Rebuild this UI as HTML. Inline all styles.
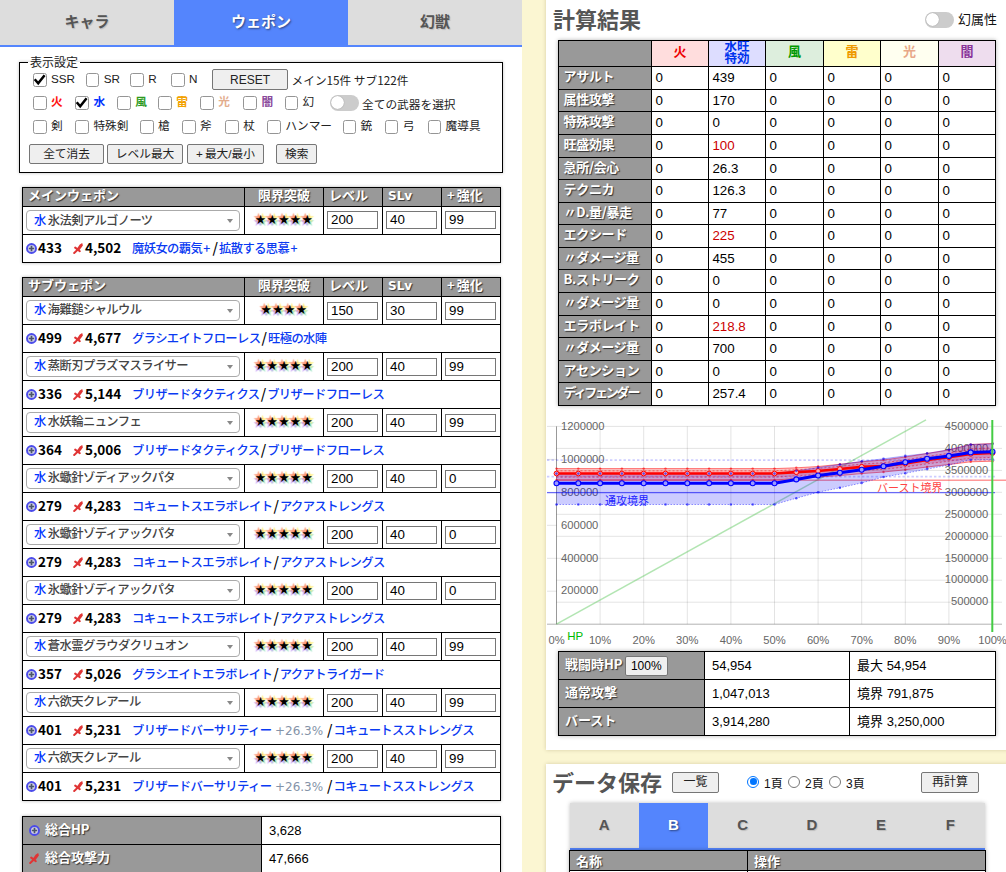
<!DOCTYPE html>
<html lang="ja"><head><meta charset="utf-8"><title>計算機</title>
<style>
html,body{margin:0;padding:0}
body{width:1006px;height:872px;overflow:hidden;background:#fbf6d2;font-family:"Liberation Sans","Noto Sans CJK JP",sans-serif;font-size:13px;color:#000;position:relative;line-height:1.2}
.jp{font-family:"Noto Sans CJK JP","Liberation Sans",sans-serif}
#left{position:absolute;left:0;top:0;width:522px;height:872px;background:#fff;overflow:hidden}
.tabs{position:absolute;left:0;top:0;width:522px;height:45px;border-bottom:2px solid #5485fd;background:#ddd;display:flex}
.tab{flex:1;text-align:center;line-height:41px;font-weight:bold;color:#555;font-size:15px;font-family:"Noto Sans CJK JP","Liberation Sans",sans-serif;text-shadow:1px 1px 1px rgba(0,0,0,.15)}
.tab.on{background:#5485fd;color:#fff;text-shadow:1px 1px 2px rgba(0,0,0,.5)}
fieldset.flt{position:absolute;left:19px;top:54px;width:482px;height:117px;margin:0;padding:0;border:1px solid #000;box-shadow:0 0 3px rgba(0,0,0,.25);box-sizing:content-box}
fieldset.flt legend{margin-left:8px;padding:0 2px;font-size:12px;line-height:16px;font-family:"Noto Sans CJK JP",sans-serif;color:#222}
.ck{position:absolute;height:16px;line-height:16px;font-size:11.7px;white-space:nowrap;color:#222}
.ck i{position:absolute;left:0;top:1px;width:11.5px;height:11.5px;border:1px solid #959595;border-radius:2.5px;background:#fff;display:block}
.ck i svg{position:absolute;left:-1px;top:-1px;display:block}
.ck span{position:absolute;left:18px;top:-1px}
.btn{position:absolute;box-sizing:border-box;border:1px solid #767676;background:#efefef;border-radius:2px;text-align:center;font-size:13px;color:#222;white-space:nowrap;font-family:"Liberation Sans","Noto Sans CJK JP",sans-serif}
.tx{position:absolute;white-space:nowrap}

table{border-collapse:collapse;border-spacing:0}
table.wt,table.sm{position:absolute;left:22px;width:478px;table-layout:fixed;box-shadow:0 0 3px rgba(0,0,0,.3);background:#fff}
table.wt td,table.wt th,table.sm td,table.sm th{border:1px solid #000;padding:0;overflow:hidden;white-space:nowrap}
table.wt tr.h{height:19px}
table.wt th,table.sm th{background:#999;color:#fff;font-weight:bold;font-size:13px;text-align:left;padding-left:5px;font-family:"Noto Sans CJK JP",sans-serif;text-shadow:1px 1px 1px #333;line-height:14px;padding-bottom:4px}
table.wt th.c{text-align:center;padding-left:0}
table.wt th .lt{font-family:"DejaVu Sans",sans-serif;font-size:12px;display:inline-block;height:14px;line-height:17px;vertical-align:top}
table.wt th .pl{letter-spacing:2px}
table.wt tr.r{height:28px}
.sel{position:relative;margin-left:3px;width:212px;height:19px;border:1px solid #aaa;border-radius:4px;font-size:12.3px;letter-spacing:-0.6px;line-height:16.5px;color:#444;font-weight:500;font-family:"Noto Sans CJK JP",sans-serif;padding-left:0;text-indent:7px;background:#fff}
.sel b{color:#0033ff;font-weight:500}
.sel .ar{position:absolute;right:6px;top:8px;width:0;height:0;border-left:3px solid transparent;border-right:3px solid transparent;border-top:4px solid #888}
table.sub .inp{top:0.5px}
table.wt:not(.sub) .sel{line-height:18.5px}
td.st{text-align:center;font-size:10.5px;letter-spacing:1.2px;padding-left:1px !important;padding-bottom:4px !important;font-family:"Noto Sans CJK JP",sans-serif;color:#000;text-shadow:-2px -2px 1px #fb9a7a,2px -2px 1px #fff08a,-2px 2px 1px #c9a8f5,2px 2px 1px #9fe3c4;line-height:18px}
.inp{position:relative;top:-0.5px;margin-left:3px;width:49px;height:16px;border:1px solid #767676;font-size:13.33px;line-height:15px;font-family:"Liberation Sans",sans-serif;text-indent:3px;background:#fff}
td.inf{font-size:11.7px;font-family:"Noto Sans CJK JP",sans-serif;line-height:18px;position:relative}
td.inf .ic{position:absolute;top:8px}
td.inf .ic:nth-of-type(1){left:3px}
td.inf .ic:nth-of-type(2){left:50px}
td.inf b{position:absolute;top:2.5px;font-size:13.5px;font-weight:bold}
td.inf b.n1{left:15px}
td.inf b.n2{left:62px}
td.inf .sk{position:absolute;left:109px;top:2px;font-size:14px;color:#000;line-height:20px}
td.inf .sk a{font-size:12.3px;letter-spacing:-0.6px;font-weight:500}
td.inf .sk .p{display:inline-block;width:9.3px;text-align:center;letter-spacing:0}
td.inf .sk .sl{display:inline-block;width:7.6px;text-align:center;font-weight:500}
td.inf .sk a{color:#0a3af2}
td.inf .sk .ex{color:#8493a8;font-family:"DejaVu Sans",sans-serif;font-size:12px;margin:0 2.8px 0 3.6px}
table.sm tr{height:28px}
table.sm th{position:relative;padding-left:22px;font-size:13px}
table.sm th .ic{position:absolute;left:6px;top:8px}
table.sm td{font-size:13px;padding-left:7px;font-family:"Liberation Sans",sans-serif}

.card{position:absolute;background:#fff;box-shadow:0 0 4px rgba(80,60,0,.22)}
h2.hd{position:absolute;margin:0;font-size:22px;line-height:32px;font-weight:bold;color:#555;font-family:"Noto Sans CJK JP",sans-serif;white-space:nowrap}
.tg{position:absolute;width:28.5px;height:16px;border-radius:8px;background:#ccc}
.tg i{position:absolute;left:1px;top:1px;width:13px;height:13px;border-radius:50%;background:#fff;box-shadow:0 0 1px rgba(0,0,0,.4)}
table.res,table.hp,table.sv{position:absolute;table-layout:fixed;box-shadow:0 0 4px rgba(0,0,0,.3);background:#fff}
table.res{width:437px}
table.res td,table.res th,table.hp td,table.hp th,table.sv td,table.sv th{border:1px solid #000;padding:0;overflow:hidden;white-space:nowrap}
table.res tr{height:22.57px}
table.res tr.h{height:26px}
table.res th,table.hp th,table.sv th{background:#999;color:#fff;font-weight:bold;font-size:13px;text-align:left;font-family:"Noto Sans CJK JP",sans-serif;text-shadow:1px 1px 1px #333;line-height:16px}
table.res th span{display:block;padding-left:4.5px;margin-top:-4px;letter-spacing:-0.3px}
table.res tr.h th{text-align:center;text-shadow:none;font-size:13px;padding:0 0 6px 0}
table.res td{font-size:13.33px;font-family:"Liberation Sans",sans-serif;padding-left:3.4px;line-height:16px}
table.res td.red{color:#cc0000}
th.e1{background:#ffdddd !important;color:#ee0000 !important}
th.e2{background:#ddddff !important;color:#0033ee !important}
th.e2 div{font-size:12.5px;line-height:12.5px;font-weight:bold;margin-top:-3px;margin-bottom:-6px}
th.e3{background:#ddeedd !important;color:#009900 !important}
th.e4{background:#ffffcc !important;color:#ee9900 !important}
th.e5{background:#fffff0 !important;color:#e8a888 !important}
th.e6{background:#eeddee !important;color:#883399 !important}
table.hp{width:437px}
table.hp tr{height:28px}
table.hp th{position:relative}
table.hp th span{padding-left:6px;position:relative;top:-2px}
table.hp td{font-size:13px;font-family:"Liberation Sans",sans-serif;padding-left:7px}
.rd{position:absolute;font-size:12px;line-height:16px;font-family:"Liberation Sans","Noto Sans CJK JP",sans-serif;color:#111;white-space:nowrap}
.rd i{position:absolute;left:0.3px;top:0.7px;width:10px;height:10px;border:1px solid #777;border-radius:50%;background:#fff}
.rd i.on{border-color:#0075ff}
.rd i.on::after{content:"";position:absolute;left:1.7px;top:1.7px;width:6.6px;height:6.6px;border-radius:50%;background:#0075ff}
.rd span{position:absolute;left:17px;top:1px}
.stabs{position:absolute;height:45px;border-bottom:2px solid #5485fd;background:#ddd;display:flex;box-shadow:0 0 4px rgba(0,0,0,.25)}
.stabs .tab{font-size:15px;line-height:43px;font-family:"Liberation Sans",sans-serif}
table.sv{width:416px}
table.sv tr{height:20px}
table.sv th{padding-left:6px}
</style></head><body>
<div id="left">
<div class="tabs"><div class="tab">キャラ</div><div class="tab on">ウェポン</div><div class="tab">幻獣</div></div>
<fieldset class="flt"><legend>表示設定</legend></fieldset>
<label class="ck" style="left:33px;top:72.3px"><i><svg width="13.5" height="13.5" viewBox="0 0 13.5 13.5"><path d="M1.7 6.3L5.2 10.3L11.6 2.2" fill="none" stroke="#000" stroke-width="2.5" stroke-linejoin="miter"/></svg></i><span style="">SSR</span></label>
<label class="ck" style="left:85.8px;top:72.3px"><i></i><span style="">SR</span></label>
<label class="ck" style="left:130.3px;top:72.3px"><i></i><span style="">R</span></label>
<label class="ck" style="left:171.1px;top:72.3px"><i></i><span style="">N</span></label>
<div class="btn" style="left:212px;top:69px;width:76px;height:21px;line-height:20.5px;font-size:12px">RESET</div>
<div class="tx jp" style="left:291.5px;top:72px;font-size:11.7px;line-height:16px;color:#222">メイン15件 サブ122件</div>
<label class="ck" style="left:33px;top:95.4px"><i></i><span style="color:#ff1111;font-weight:bold;">火</span></label>
<label class="ck" style="left:75.4px;top:95.4px"><i><svg width="13.5" height="13.5" viewBox="0 0 13.5 13.5"><path d="M1.7 6.3L5.2 10.3L11.6 2.2" fill="none" stroke="#000" stroke-width="2.5" stroke-linejoin="miter"/></svg></i><span style="color:#0033ff;font-weight:bold;">水</span></label>
<label class="ck" style="left:117.2px;top:95.4px"><i></i><span style="color:#2e9a1e;font-weight:bold;">風</span></label>
<label class="ck" style="left:158.2px;top:95.4px"><i></i><span style="color:#f2a200;font-weight:bold;">雷</span></label>
<label class="ck" style="left:200.2px;top:95.4px"><i></i><span style="color:#e3ad8e;font-weight:bold;">光</span></label>
<label class="ck" style="left:243.4px;top:95.4px"><i></i><span style="color:#8a4a9c;font-weight:bold;">闇</span></label>
<label class="ck" style="left:284.6px;top:95.4px"><i></i><span style="color:#222;">幻</span></label>
<div class="tg" style="left:330px;top:95px"><i></i></div>
<div class="tx jp" style="left:362px;top:95.5px;font-size:11.7px;line-height:16px;color:#222">全ての武器を選択</div>
<label class="ck" style="left:33px;top:119.2px"><i></i><span style="">剣</span></label>
<label class="ck" style="left:75.4px;top:119.2px"><i></i><span style="">特殊剣</span></label>
<label class="ck" style="left:140px;top:119.2px"><i></i><span style="">槍</span></label>
<label class="ck" style="left:182px;top:119.2px"><i></i><span style="">斧</span></label>
<label class="ck" style="left:225.3px;top:119.2px"><i></i><span style="">杖</span></label>
<label class="ck" style="left:267.3px;top:119.2px"><i></i><span style="">ハンマー</span></label>
<label class="ck" style="left:342.5px;top:119.2px"><i></i><span style="">銃</span></label>
<label class="ck" style="left:384.8px;top:119.2px"><i></i><span style="">弓</span></label>
<label class="ck" style="left:427.5px;top:119.2px"><i></i><span style="">魔導具</span></label>
<div class="btn jp" style="left:29.3px;top:143.5px;width:74.5px;height:20.5px;line-height:18px;font-size:11.7px">全て消去</div>
<div class="btn jp" style="left:107.3px;top:143.5px;width:75.5px;height:20.5px;line-height:18px;font-size:11.7px">レベル最大</div>
<div class="btn jp" style="left:187px;top:143.5px;width:77px;height:20.5px;line-height:18px;font-size:11.7px"><span style="letter-spacing:2px">+</span>最大/最小</div>
<div class="btn jp" style="left:276.3px;top:143.5px;width:41px;height:20.5px;line-height:18px;font-size:11.7px">検索</div>
<table class="wt" style="top:187px"><colgroup><col style="width:222px"><col style="width:79px"><col style="width:59px"><col style="width:59px"><col style="width:59px"></colgroup>
<tr class="h"><th>メインウェポン</th><th class="c">限界突破</th><th>レベル</th><th><span class="lt">SLv</span></th><th><span class="pl">+</span>強化</th></tr>
<tr class="r"><td><div class="sel"><b>水</b> 氷法剣アルゴノーツ<span class="ar"></span></div></td><td class="st">★★★★★</td><td><div class="inp">200</div></td><td><div class="inp">40</div></td><td><div class="inp">99</div></td></tr>
<tr class="r"><td colspan="5" class="inf"><svg class="ic" width="11" height="11" viewBox="0 0 11 11"><circle cx="5.5" cy="5.5" r="4.5" fill="#cfcfe6" stroke="#4b4bea" stroke-width="1.9"/><path d="M5.5 2.8v5.4M2.8 5.5h5.4" stroke="#4a5568" stroke-width="1.7" fill="none"/></svg><b class="n1">433</b><svg class="ic" width="10" height="11" viewBox="0 0 10 11"><path d="M9.2 0L9.9 2.4 6.2 7.6 3.8 5.8 6.8 1.4z" fill="#e03535"/><path d="M2.2 4.6L6.8 8.2M4.6 6.8L1.2 10" stroke="#e03535" stroke-width="2" fill="none" stroke-linecap="round"/></svg><b class="n2">4,502</b><span class="sk"><a>魔妖女の覇気<span class="p">+</span></a><span class="sl">/</span><a>拡散する思慕<span class="p">+</span></a></span></td></tr>
</table>
<table class="wt sub" style="top:277px"><colgroup><col style="width:222px"><col style="width:79px"><col style="width:59px"><col style="width:59px"><col style="width:59px"></colgroup>
<tr class="h"><th>サブウェポン</th><th class="c">限界突破</th><th>レベル</th><th><span class="lt">SLv</span></th><th><span class="pl">+</span>強化</th></tr>
<tr class="r"><td><div class="sel"><b>水</b> 海難鎚シャルウル<span class="ar"></span></div></td><td class="st">★★★★</td><td><div class="inp">150</div></td><td><div class="inp">30</div></td><td><div class="inp">99</div></td></tr>
<tr class="r"><td colspan="5" class="inf"><svg class="ic" width="11" height="11" viewBox="0 0 11 11"><circle cx="5.5" cy="5.5" r="4.5" fill="#cfcfe6" stroke="#4b4bea" stroke-width="1.9"/><path d="M5.5 2.8v5.4M2.8 5.5h5.4" stroke="#4a5568" stroke-width="1.7" fill="none"/></svg><b class="n1">499</b><svg class="ic" width="10" height="11" viewBox="0 0 10 11"><path d="M9.2 0L9.9 2.4 6.2 7.6 3.8 5.8 6.8 1.4z" fill="#e03535"/><path d="M2.2 4.6L6.8 8.2M4.6 6.8L1.2 10" stroke="#e03535" stroke-width="2" fill="none" stroke-linecap="round"/></svg><b class="n2">4,677</b><span class="sk"><a>グラシエイトフローレス</a><span class="sl">/</span><a>旺極の水陣</a></span></td></tr>
<tr class="r"><td><div class="sel"><b>水</b> 蒸断刃プラズマスライサー<span class="ar"></span></div></td><td class="st">★★★★★</td><td><div class="inp">200</div></td><td><div class="inp">40</div></td><td><div class="inp">99</div></td></tr>
<tr class="r"><td colspan="5" class="inf"><svg class="ic" width="11" height="11" viewBox="0 0 11 11"><circle cx="5.5" cy="5.5" r="4.5" fill="#cfcfe6" stroke="#4b4bea" stroke-width="1.9"/><path d="M5.5 2.8v5.4M2.8 5.5h5.4" stroke="#4a5568" stroke-width="1.7" fill="none"/></svg><b class="n1">336</b><svg class="ic" width="10" height="11" viewBox="0 0 10 11"><path d="M9.2 0L9.9 2.4 6.2 7.6 3.8 5.8 6.8 1.4z" fill="#e03535"/><path d="M2.2 4.6L6.8 8.2M4.6 6.8L1.2 10" stroke="#e03535" stroke-width="2" fill="none" stroke-linecap="round"/></svg><b class="n2">5,144</b><span class="sk"><a>ブリザードタクティクス</a><span class="sl">/</span><a>ブリザードフローレス</a></span></td></tr>
<tr class="r"><td><div class="sel"><b>水</b> 水妖輪ニュンフェ<span class="ar"></span></div></td><td class="st">★★★★★</td><td><div class="inp">200</div></td><td><div class="inp">40</div></td><td><div class="inp">99</div></td></tr>
<tr class="r"><td colspan="5" class="inf"><svg class="ic" width="11" height="11" viewBox="0 0 11 11"><circle cx="5.5" cy="5.5" r="4.5" fill="#cfcfe6" stroke="#4b4bea" stroke-width="1.9"/><path d="M5.5 2.8v5.4M2.8 5.5h5.4" stroke="#4a5568" stroke-width="1.7" fill="none"/></svg><b class="n1">364</b><svg class="ic" width="10" height="11" viewBox="0 0 10 11"><path d="M9.2 0L9.9 2.4 6.2 7.6 3.8 5.8 6.8 1.4z" fill="#e03535"/><path d="M2.2 4.6L6.8 8.2M4.6 6.8L1.2 10" stroke="#e03535" stroke-width="2" fill="none" stroke-linecap="round"/></svg><b class="n2">5,006</b><span class="sk"><a>ブリザードタクティクス</a><span class="sl">/</span><a>ブリザードフローレス</a></span></td></tr>
<tr class="r"><td><div class="sel"><b>水</b> 氷蠍針ゾディアックパタ<span class="ar"></span></div></td><td class="st">★★★★★</td><td><div class="inp">200</div></td><td><div class="inp">40</div></td><td><div class="inp">0</div></td></tr>
<tr class="r"><td colspan="5" class="inf"><svg class="ic" width="11" height="11" viewBox="0 0 11 11"><circle cx="5.5" cy="5.5" r="4.5" fill="#cfcfe6" stroke="#4b4bea" stroke-width="1.9"/><path d="M5.5 2.8v5.4M2.8 5.5h5.4" stroke="#4a5568" stroke-width="1.7" fill="none"/></svg><b class="n1">279</b><svg class="ic" width="10" height="11" viewBox="0 0 10 11"><path d="M9.2 0L9.9 2.4 6.2 7.6 3.8 5.8 6.8 1.4z" fill="#e03535"/><path d="M2.2 4.6L6.8 8.2M4.6 6.8L1.2 10" stroke="#e03535" stroke-width="2" fill="none" stroke-linecap="round"/></svg><b class="n2">4,283</b><span class="sk"><a>コキュートスエラボレイト</a><span class="sl">/</span><a>アクアストレングス</a></span></td></tr>
<tr class="r"><td><div class="sel"><b>水</b> 氷蠍針ゾディアックパタ<span class="ar"></span></div></td><td class="st">★★★★★</td><td><div class="inp">200</div></td><td><div class="inp">40</div></td><td><div class="inp">0</div></td></tr>
<tr class="r"><td colspan="5" class="inf"><svg class="ic" width="11" height="11" viewBox="0 0 11 11"><circle cx="5.5" cy="5.5" r="4.5" fill="#cfcfe6" stroke="#4b4bea" stroke-width="1.9"/><path d="M5.5 2.8v5.4M2.8 5.5h5.4" stroke="#4a5568" stroke-width="1.7" fill="none"/></svg><b class="n1">279</b><svg class="ic" width="10" height="11" viewBox="0 0 10 11"><path d="M9.2 0L9.9 2.4 6.2 7.6 3.8 5.8 6.8 1.4z" fill="#e03535"/><path d="M2.2 4.6L6.8 8.2M4.6 6.8L1.2 10" stroke="#e03535" stroke-width="2" fill="none" stroke-linecap="round"/></svg><b class="n2">4,283</b><span class="sk"><a>コキュートスエラボレイト</a><span class="sl">/</span><a>アクアストレングス</a></span></td></tr>
<tr class="r"><td><div class="sel"><b>水</b> 氷蠍針ゾディアックパタ<span class="ar"></span></div></td><td class="st">★★★★★</td><td><div class="inp">200</div></td><td><div class="inp">40</div></td><td><div class="inp">0</div></td></tr>
<tr class="r"><td colspan="5" class="inf"><svg class="ic" width="11" height="11" viewBox="0 0 11 11"><circle cx="5.5" cy="5.5" r="4.5" fill="#cfcfe6" stroke="#4b4bea" stroke-width="1.9"/><path d="M5.5 2.8v5.4M2.8 5.5h5.4" stroke="#4a5568" stroke-width="1.7" fill="none"/></svg><b class="n1">279</b><svg class="ic" width="10" height="11" viewBox="0 0 10 11"><path d="M9.2 0L9.9 2.4 6.2 7.6 3.8 5.8 6.8 1.4z" fill="#e03535"/><path d="M2.2 4.6L6.8 8.2M4.6 6.8L1.2 10" stroke="#e03535" stroke-width="2" fill="none" stroke-linecap="round"/></svg><b class="n2">4,283</b><span class="sk"><a>コキュートスエラボレイト</a><span class="sl">/</span><a>アクアストレングス</a></span></td></tr>
<tr class="r"><td><div class="sel"><b>水</b> 蒼水霊グラウダクリュオン<span class="ar"></span></div></td><td class="st">★★★★★</td><td><div class="inp">200</div></td><td><div class="inp">40</div></td><td><div class="inp">99</div></td></tr>
<tr class="r"><td colspan="5" class="inf"><svg class="ic" width="11" height="11" viewBox="0 0 11 11"><circle cx="5.5" cy="5.5" r="4.5" fill="#cfcfe6" stroke="#4b4bea" stroke-width="1.9"/><path d="M5.5 2.8v5.4M2.8 5.5h5.4" stroke="#4a5568" stroke-width="1.7" fill="none"/></svg><b class="n1">357</b><svg class="ic" width="10" height="11" viewBox="0 0 10 11"><path d="M9.2 0L9.9 2.4 6.2 7.6 3.8 5.8 6.8 1.4z" fill="#e03535"/><path d="M2.2 4.6L6.8 8.2M4.6 6.8L1.2 10" stroke="#e03535" stroke-width="2" fill="none" stroke-linecap="round"/></svg><b class="n2">5,026</b><span class="sk"><a>グラシエイトエラボレイト</a><span class="sl">/</span><a>アクアトライガード</a></span></td></tr>
<tr class="r"><td><div class="sel"><b>水</b> 六欲天クレアール<span class="ar"></span></div></td><td class="st">★★★★★</td><td><div class="inp">200</div></td><td><div class="inp">40</div></td><td><div class="inp">99</div></td></tr>
<tr class="r"><td colspan="5" class="inf"><svg class="ic" width="11" height="11" viewBox="0 0 11 11"><circle cx="5.5" cy="5.5" r="4.5" fill="#cfcfe6" stroke="#4b4bea" stroke-width="1.9"/><path d="M5.5 2.8v5.4M2.8 5.5h5.4" stroke="#4a5568" stroke-width="1.7" fill="none"/></svg><b class="n1">401</b><svg class="ic" width="10" height="11" viewBox="0 0 10 11"><path d="M9.2 0L9.9 2.4 6.2 7.6 3.8 5.8 6.8 1.4z" fill="#e03535"/><path d="M2.2 4.6L6.8 8.2M4.6 6.8L1.2 10" stroke="#e03535" stroke-width="2" fill="none" stroke-linecap="round"/></svg><b class="n2">5,231</b><span class="sk"><a>ブリザードバーサリティー</a><span class="ex">+26.3%</span><span class="sl">/</span><a>コキュートスストレングス</a></span></td></tr>
<tr class="r"><td><div class="sel"><b>水</b> 六欲天クレアール<span class="ar"></span></div></td><td class="st">★★★★★</td><td><div class="inp">200</div></td><td><div class="inp">40</div></td><td><div class="inp">99</div></td></tr>
<tr class="r"><td colspan="5" class="inf"><svg class="ic" width="11" height="11" viewBox="0 0 11 11"><circle cx="5.5" cy="5.5" r="4.5" fill="#cfcfe6" stroke="#4b4bea" stroke-width="1.9"/><path d="M5.5 2.8v5.4M2.8 5.5h5.4" stroke="#4a5568" stroke-width="1.7" fill="none"/></svg><b class="n1">401</b><svg class="ic" width="10" height="11" viewBox="0 0 10 11"><path d="M9.2 0L9.9 2.4 6.2 7.6 3.8 5.8 6.8 1.4z" fill="#e03535"/><path d="M2.2 4.6L6.8 8.2M4.6 6.8L1.2 10" stroke="#e03535" stroke-width="2" fill="none" stroke-linecap="round"/></svg><b class="n2">5,231</b><span class="sk"><a>ブリザードバーサリティー</a><span class="ex">+26.3%</span><span class="sl">/</span><a>コキュートスストレングス</a></span></td></tr>
</table>
<table class="sm" style="top:816px"><colgroup><col style="width:239px"><col style="width:239px"></colgroup>
<tr><th><svg class="ic" width="11" height="11" viewBox="0 0 11 11"><circle cx="5.5" cy="5.5" r="4.5" fill="#cfcfe6" stroke="#4b4bea" stroke-width="1.9"/><path d="M5.5 2.8v5.4M2.8 5.5h5.4" stroke="#4a5568" stroke-width="1.7" fill="none"/></svg><span>総合HP</span></th><td>3,628</td></tr>
<tr><th><svg class="ic" width="10" height="11" viewBox="0 0 10 11"><path d="M9.2 0L9.9 2.4 6.2 7.6 3.8 5.8 6.8 1.4z" fill="#e03535"/><path d="M2.2 4.6L6.8 8.2M4.6 6.8L1.2 10" stroke="#e03535" stroke-width="2" fill="none" stroke-linecap="round"/></svg><span>総合攻撃力</span></th><td>47,666</td></tr>
<tr><th><span>&nbsp;</span></th><td></td></tr>
</table>
</div>
<div id="r1" class="card" style="left:546px;top:-6px;width:466px;height:756px"></div>
<div id="r2" class="card" style="left:546px;top:764px;width:466px;height:120px"></div>
<h2 class="hd" style="left:553px;top:1.5px">計算結果</h2>
<div class="tg" style="left:925px;top:12px"><i></i></div><div class="tx jp" style="left:958px;top:9px;font-size:13px;line-height:19px;color:#111">幻属性</div>
<table class="res" style="left:558px;top:40px"><colgroup><col style="width:93px"><col style="width:57px"><col style="width:57px"><col style="width:58px"><col style="width:57px"><col style="width:58px"><col style="width:57px"></colgroup>
<tr class="h"><th></th><th class="e1">火</th><th class="e2"><div>水旺<br>特効</div></th><th class="e3">風</th><th class="e4">雷</th><th class="e5">光</th><th class="e6">闇</th></tr>
<tr style="height:23px"><th><span>アサルト</span></th><td>0</td><td>439</td><td>0</td><td>0</td><td>0</td><td>0</td></tr>
<tr style="height:22px"><th><span>属性攻撃</span></th><td>0</td><td>170</td><td>0</td><td>0</td><td>0</td><td>0</td></tr>
<tr style="height:23px"><th><span>特殊攻撃</span></th><td>0</td><td>0</td><td>0</td><td>0</td><td>0</td><td>0</td></tr>
<tr style="height:23px"><th><span>旺盛効果</span></th><td>0</td><td class="red">100</td><td>0</td><td>0</td><td>0</td><td>0</td></tr>
<tr style="height:22px"><th><span>急所/会心</span></th><td>0</td><td>26.3</td><td>0</td><td>0</td><td>0</td><td>0</td></tr>
<tr style="height:23px"><th><span>テクニカ</span></th><td>0</td><td>126.3</td><td>0</td><td>0</td><td>0</td><td>0</td></tr>
<tr style="height:22px"><th><span>〃D.量/暴走</span></th><td>0</td><td>77</td><td>0</td><td>0</td><td>0</td><td>0</td></tr>
<tr style="height:23px"><th><span>エクシード</span></th><td>0</td><td class="red">225</td><td>0</td><td>0</td><td>0</td><td>0</td></tr>
<tr style="height:22px"><th><span>〃ダメージ量</span></th><td>0</td><td>455</td><td>0</td><td>0</td><td>0</td><td>0</td></tr>
<tr style="height:23px"><th><span>B.ストリーク</span></th><td>0</td><td>0</td><td>0</td><td>0</td><td>0</td><td>0</td></tr>
<tr style="height:23px"><th><span>〃ダメージ量</span></th><td>0</td><td>0</td><td>0</td><td>0</td><td>0</td><td>0</td></tr>
<tr style="height:22px"><th><span>エラボレイト</span></th><td>0</td><td class="red">218.8</td><td>0</td><td>0</td><td>0</td><td>0</td></tr>
<tr style="height:23px"><th><span>〃ダメージ量</span></th><td>0</td><td>700</td><td>0</td><td>0</td><td>0</td><td>0</td></tr>
<tr style="height:22px"><th><span>アセンション</span></th><td>0</td><td>0</td><td>0</td><td>0</td><td>0</td><td>0</td></tr>
<tr style="height:23px"><th><span style="letter-spacing:-2.2px">ディフェンダー</span></th><td>0</td><td>257.4</td><td>0</td><td>0</td><td>0</td><td>0</td></tr>
</table>
<svg id="chart" width="460" height="244" viewBox="546 408 460 244" style="position:absolute;left:546px;top:408px;overflow:hidden" font-family="Liberation Sans, sans-serif">
<g stroke="#000" stroke-opacity="0.11" stroke-width="1" fill="none">
<path d="M600.1 426.4V624.2"/>
<path d="M643.7 426.4V624.2"/>
<path d="M687.3 426.4V624.2"/>
<path d="M730.9 426.4V624.2"/>
<path d="M774.5 426.4V624.2"/>
<path d="M818.1 426.4V624.2"/>
<path d="M861.7 426.4V624.2"/>
<path d="M905.3 426.4V624.2"/>
<path d="M948.9 426.4V624.2"/>
<path d="M547.0 426.4H1002"/>
<path d="M556.5 448.4H1002"/>
<path d="M556.5 470.4H1002"/>
<path d="M556.5 492.3H1002"/>
<path d="M556.5 514.3H1002"/>
<path d="M556.5 536.3H1002"/>
<path d="M556.5 558.3H1002"/>
<path d="M556.5 580.2H1002"/>
<path d="M556.5 602.2H1002"/>
<path d="M547 459.4H556.5"/>
<path d="M547 492.3H556.5"/>
<path d="M547 525.3H556.5"/>
<path d="M547 558.3H556.5"/>
<path d="M547 591.2H556.5"/>
</g>
<path d="M547 624.2H1002" stroke="#000" stroke-opacity="0.3" stroke-width="1" fill="none"/>
<path d="M556.5 426.4V624.2" stroke="#000" stroke-opacity="0.4" stroke-width="1" fill="none"/>
<g font-size="11.2" fill="#666">
<text x="561" y="429.6">1200000</text>
<text x="561" y="462.6">1000000</text>
<text x="561" y="495.5">800000</text>
<text x="561" y="528.5">600000</text>
<text x="561" y="561.5">400000</text>
<text x="561" y="594.4">200000</text>
<text x="988.3" y="429.6" text-anchor="end">4500000</text>
<text x="988.3" y="451.6" text-anchor="end">4000000</text>
<text x="988.3" y="473.6" text-anchor="end">3500000</text>
<text x="988.3" y="495.5" text-anchor="end">3000000</text>
<text x="988.3" y="517.5" text-anchor="end">2500000</text>
<text x="988.3" y="539.5" text-anchor="end">2000000</text>
<text x="988.3" y="561.5" text-anchor="end">1500000</text>
<text x="988.3" y="583.4" text-anchor="end">1000000</text>
<text x="988.3" y="605.4" text-anchor="end">500000</text>
<text x="556.5" y="643.5" text-anchor="middle">0%</text>
<text x="600.1" y="643.5" text-anchor="middle">10%</text>
<text x="643.7" y="643.5" text-anchor="middle">20%</text>
<text x="687.3" y="643.5" text-anchor="middle">30%</text>
<text x="730.9" y="643.5" text-anchor="middle">40%</text>
<text x="774.5" y="643.5" text-anchor="middle">50%</text>
<text x="818.1" y="643.5" text-anchor="middle">60%</text>
<text x="861.7" y="643.5" text-anchor="middle">70%</text>
<text x="905.3" y="643.5" text-anchor="middle">80%</text>
<text x="948.9" y="643.5" text-anchor="middle">90%</text>
<text x="992.5" y="643.5" text-anchor="middle">100%</text>
</g>
<text x="567.3" y="639.5" font-size="11.5" fill="#00bb00">HP</text>
<path d="M556.5 624.2L926 419.8" stroke="#66cc66" stroke-opacity="0.5" stroke-width="1.5" fill="none"/>
<path d="M547 460.2H995M547 476.6H995" stroke="#0000ff" stroke-opacity="0.2" stroke-width="1.8" stroke-dasharray="2.4 2.1" fill="none"/>
<path d="M547 492.6H995" stroke="#0000ff" stroke-opacity="0.55" stroke-width="1.2" fill="none"/>
<path d="M556.5 480.2H1006" stroke="#ff0000" stroke-opacity="0.4" stroke-width="1.5" fill="none"/>
<polygon points="556.5,468.6 578.3,468.6 600.1,468.6 621.9,468.6 643.7,468.6 665.5,468.6 687.3,468.6 709.1,468.6 730.9,468.6 752.7,468.6 774.5,468.6 796.3,467.8 818.1,466.5 839.9,464.3 861.7,461.8 883.5,460.0 905.3,457.0 927.1,453.5 948.9,450.0 970.7,444.5 992.5,443.5 992.5,461.2 970.7,461.8 948.9,464.5 927.1,467.0 905.3,469.8 883.5,472.0 861.7,473.6 839.9,475.5 818.1,477.2 796.3,478.5 774.5,480.0 752.7,480.0 730.9,480.0 709.1,480.0 687.3,480.0 665.5,480.0 643.7,480.0 621.9,480.0 600.1,480.0 578.3,480.0 556.5,480.0" fill="#ff0000" fill-opacity="0.22"/>
<polygon points="556.5,470.8 578.3,470.8 600.1,470.8 621.9,470.8 643.7,470.8 665.5,470.8 687.3,470.8 709.1,470.8 730.9,470.8 752.7,470.8 774.5,470.8 796.3,469.7 818.1,468.4 839.9,466.3 861.7,464.0 883.5,462.7 905.3,459.9 927.1,456.4 948.9,453.3 970.7,448.8 992.5,447.9 992.5,457.4 970.7,458.1 948.9,461.2 927.1,463.8 905.3,466.9 883.5,469.3 861.7,470.5 839.9,472.6 818.1,474.4 796.3,475.7 774.5,477.1 752.7,477.1 730.9,477.1 709.1,477.1 687.3,477.1 665.5,477.1 643.7,477.1 621.9,477.1 600.1,477.1 578.3,477.1 556.5,477.1" fill="#ff0000" fill-opacity="0.12"/>
<g stroke="#ff0000" stroke-opacity="0.5" stroke-width="1" fill="none"><polyline points="556.5,468.6 578.3,468.6 600.1,468.6 621.9,468.6 643.7,468.6 665.5,468.6 687.3,468.6 709.1,468.6 730.9,468.6 752.7,468.6 774.5,468.6 796.3,467.8 818.1,466.5 839.9,464.3 861.7,461.8 883.5,460.0 905.3,457.0 927.1,453.5 948.9,450.0 970.7,444.5 992.5,443.5"/><polyline points="556.5,480.0 578.3,480.0 600.1,480.0 621.9,480.0 643.7,480.0 665.5,480.0 687.3,480.0 709.1,480.0 730.9,480.0 752.7,480.0 774.5,480.0 796.3,478.5 818.1,477.2 839.9,475.5 861.7,473.6 883.5,472.0 905.3,469.8 927.1,467.0 948.9,464.5 970.7,461.8 992.5,461.2"/><polyline points="556.5,470.8 578.3,470.8 600.1,470.8 621.9,470.8 643.7,470.8 665.5,470.8 687.3,470.8 709.1,470.8 730.9,470.8 752.7,470.8 774.5,470.8 796.3,469.7 818.1,468.4 839.9,466.3 861.7,464.0 883.5,462.7 905.3,459.9 927.1,456.4 948.9,453.3 970.7,448.8 992.5,447.9" stroke-dasharray="2 2"/><polyline points="556.5,477.1 578.3,477.1 600.1,477.1 621.9,477.1 643.7,477.1 665.5,477.1 687.3,477.1 709.1,477.1 730.9,477.1 752.7,477.1 774.5,477.1 796.3,475.7 818.1,474.4 839.9,472.6 861.7,470.5 883.5,469.3 905.3,466.9 927.1,463.8 948.9,461.2 970.7,458.1 992.5,457.4" stroke-dasharray="2 2"/></g>
<g fill="#ff0000" fill-opacity="0.6">
<circle cx="556.5" cy="468.6" r="1.2"/>
<circle cx="578.3" cy="468.6" r="1.2"/>
<circle cx="600.1" cy="468.6" r="1.2"/>
<circle cx="621.9" cy="468.6" r="1.2"/>
<circle cx="643.7" cy="468.6" r="1.2"/>
<circle cx="665.5" cy="468.6" r="1.2"/>
<circle cx="687.3" cy="468.6" r="1.2"/>
<circle cx="709.1" cy="468.6" r="1.2"/>
<circle cx="730.9" cy="468.6" r="1.2"/>
<circle cx="752.7" cy="468.6" r="1.2"/>
<circle cx="774.5" cy="468.6" r="1.2"/>
<circle cx="796.3" cy="467.8" r="1.2"/>
<circle cx="818.1" cy="466.5" r="1.2"/>
<circle cx="839.9" cy="464.3" r="1.2"/>
<circle cx="861.7" cy="461.8" r="1.2"/>
<circle cx="883.5" cy="460.0" r="1.2"/>
<circle cx="905.3" cy="457.0" r="1.2"/>
<circle cx="927.1" cy="453.5" r="1.2"/>
<circle cx="948.9" cy="450.0" r="1.2"/>
<circle cx="970.7" cy="444.5" r="1.2"/>
<circle cx="992.5" cy="443.5" r="1.2"/>
<circle cx="556.5" cy="480.0" r="1.2"/>
<circle cx="578.3" cy="480.0" r="1.2"/>
<circle cx="600.1" cy="480.0" r="1.2"/>
<circle cx="621.9" cy="480.0" r="1.2"/>
<circle cx="643.7" cy="480.0" r="1.2"/>
<circle cx="665.5" cy="480.0" r="1.2"/>
<circle cx="687.3" cy="480.0" r="1.2"/>
<circle cx="709.1" cy="480.0" r="1.2"/>
<circle cx="730.9" cy="480.0" r="1.2"/>
<circle cx="752.7" cy="480.0" r="1.2"/>
<circle cx="774.5" cy="480.0" r="1.2"/>
<circle cx="796.3" cy="478.5" r="1.2"/>
<circle cx="818.1" cy="477.2" r="1.2"/>
<circle cx="839.9" cy="475.5" r="1.2"/>
<circle cx="861.7" cy="473.6" r="1.2"/>
<circle cx="883.5" cy="472.0" r="1.2"/>
<circle cx="905.3" cy="469.8" r="1.2"/>
<circle cx="927.1" cy="467.0" r="1.2"/>
<circle cx="948.9" cy="464.5" r="1.2"/>
<circle cx="970.7" cy="461.8" r="1.2"/>
<circle cx="992.5" cy="461.2" r="1.2"/>
</g>
<polygon points="556.5,473.6 578.3,473.6 600.1,473.6 621.9,473.6 643.7,473.6 665.5,473.6 687.3,473.6 709.1,473.6 730.9,473.6 752.7,473.6 774.5,473.6 796.3,470.8 818.1,467.6 839.9,464.5 861.7,461.3 883.5,458.8 905.3,455.9 927.1,453.4 948.9,449.7 970.7,444.5 992.5,443.8 992.5,459.4 970.7,459.8 948.9,465.0 927.1,469.1 905.3,473.3 883.5,477.0 861.7,482.9 839.9,487.8 818.1,492.2 796.3,498.2 774.5,504.5 752.7,504.5 730.9,504.5 709.1,504.5 687.3,504.5 665.5,504.5 643.7,504.5 621.9,504.5 600.1,504.5 578.3,504.5 556.5,504.5" fill="#0000ff" fill-opacity="0.2"/>
<g stroke="#0000ff" stroke-opacity="0.3" stroke-width="1" fill="none"><polyline points="556.5,473.6 578.3,473.6 600.1,473.6 621.9,473.6 643.7,473.6 665.5,473.6 687.3,473.6 709.1,473.6 730.9,473.6 752.7,473.6 774.5,473.6 796.3,470.8 818.1,467.6 839.9,464.5 861.7,461.3 883.5,458.8 905.3,455.9 927.1,453.4 948.9,449.7 970.7,444.5 992.5,443.8"/><polyline points="556.5,504.5 578.3,504.5 600.1,504.5 621.9,504.5 643.7,504.5 665.5,504.5 687.3,504.5 709.1,504.5 730.9,504.5 752.7,504.5 774.5,504.5 796.3,498.2 818.1,492.2 839.9,487.8 861.7,482.9 883.5,477.0 905.3,473.3 927.1,469.1 948.9,465.0 970.7,459.8 992.5,459.4" stroke-opacity="0.4" stroke-dasharray="1.5 1.5"/></g>
<polyline points="556.5,473.5 578.3,473.5 600.1,473.5 621.9,473.5 643.7,473.5 665.5,473.5 687.3,473.5 709.1,473.5 730.9,473.5 752.7,473.5 774.5,473.5 796.3,472.2 818.1,471.0 839.9,469.0 861.7,466.8 883.5,466.0 905.3,463.5 927.1,460.0 948.9,457.2 970.7,453.8 992.5,453.0" stroke="#ff0000" stroke-width="2.7" fill="none" stroke-linejoin="round"/>
<g fill="#ffb0b0" stroke="#ff0000" stroke-width="1">
<circle cx="556.5" cy="473.5" r="2.4"/>
<circle cx="578.3" cy="473.5" r="2.4"/>
<circle cx="600.1" cy="473.5" r="2.4"/>
<circle cx="621.9" cy="473.5" r="2.4"/>
<circle cx="643.7" cy="473.5" r="2.4"/>
<circle cx="665.5" cy="473.5" r="2.4"/>
<circle cx="687.3" cy="473.5" r="2.4"/>
<circle cx="709.1" cy="473.5" r="2.4"/>
<circle cx="730.9" cy="473.5" r="2.4"/>
<circle cx="752.7" cy="473.5" r="2.4"/>
<circle cx="774.5" cy="473.5" r="2.4"/>
<circle cx="796.3" cy="472.2" r="2.4"/>
<circle cx="818.1" cy="471.0" r="2.4"/>
<circle cx="839.9" cy="469.0" r="2.4"/>
<circle cx="861.7" cy="466.8" r="2.4"/>
<circle cx="883.5" cy="466.0" r="2.4"/>
<circle cx="905.3" cy="463.5" r="2.4"/>
<circle cx="927.1" cy="460.0" r="2.4"/>
<circle cx="948.9" cy="457.2" r="2.4"/>
<circle cx="970.7" cy="453.8" r="2.4"/>
<circle cx="992.5" cy="453.0" r="2.4"/>
</g>
<g fill="#0000ff" fill-opacity="0.6">
<circle cx="556.5" cy="473.6" r="1.3"/>
<circle cx="578.3" cy="473.6" r="1.3"/>
<circle cx="600.1" cy="473.6" r="1.3"/>
<circle cx="621.9" cy="473.6" r="1.3"/>
<circle cx="643.7" cy="473.6" r="1.3"/>
<circle cx="665.5" cy="473.6" r="1.3"/>
<circle cx="687.3" cy="473.6" r="1.3"/>
<circle cx="709.1" cy="473.6" r="1.3"/>
<circle cx="730.9" cy="473.6" r="1.3"/>
<circle cx="752.7" cy="473.6" r="1.3"/>
<circle cx="774.5" cy="473.6" r="1.3"/>
<circle cx="796.3" cy="470.8" r="1.3"/>
<circle cx="818.1" cy="467.6" r="1.3"/>
<circle cx="839.9" cy="464.5" r="1.3"/>
<circle cx="861.7" cy="461.3" r="1.3"/>
<circle cx="883.5" cy="458.8" r="1.3"/>
<circle cx="905.3" cy="455.9" r="1.3"/>
<circle cx="927.1" cy="453.4" r="1.3"/>
<circle cx="948.9" cy="449.7" r="1.3"/>
<circle cx="970.7" cy="444.5" r="1.3"/>
<circle cx="992.5" cy="443.8" r="1.3"/>
<circle cx="556.5" cy="504.5" r="1.3"/>
<circle cx="578.3" cy="504.5" r="1.3"/>
<circle cx="600.1" cy="504.5" r="1.3"/>
<circle cx="621.9" cy="504.5" r="1.3"/>
<circle cx="643.7" cy="504.5" r="1.3"/>
<circle cx="665.5" cy="504.5" r="1.3"/>
<circle cx="687.3" cy="504.5" r="1.3"/>
<circle cx="709.1" cy="504.5" r="1.3"/>
<circle cx="730.9" cy="504.5" r="1.3"/>
<circle cx="752.7" cy="504.5" r="1.3"/>
<circle cx="774.5" cy="504.5" r="1.3"/>
<circle cx="796.3" cy="498.2" r="1.3"/>
<circle cx="818.1" cy="492.2" r="1.3"/>
<circle cx="839.9" cy="487.8" r="1.3"/>
<circle cx="861.7" cy="482.9" r="1.3"/>
<circle cx="883.5" cy="477.0" r="1.3"/>
<circle cx="905.3" cy="473.3" r="1.3"/>
<circle cx="927.1" cy="469.1" r="1.3"/>
<circle cx="948.9" cy="465.0" r="1.3"/>
<circle cx="970.7" cy="459.8" r="1.3"/>
<circle cx="992.5" cy="459.4" r="1.3"/>
</g>
<polyline points="556.5,483.3 578.3,483.3 600.1,483.3 621.9,483.3 643.7,483.3 665.5,483.3 687.3,483.3 709.1,483.3 730.9,483.3 752.7,483.3 774.5,483.3 796.3,479.4 818.1,475.5 839.9,472.8 861.7,469.8 883.5,466.3 905.3,462.2 927.1,458.7 948.9,455.9 970.7,452.4 992.5,451.7" stroke="#0000ff" stroke-width="3" fill="none" stroke-linejoin="round"/>
<g fill="#9a9aff" stroke="#0000ff" stroke-width="1.1">
<circle cx="556.5" cy="483.3" r="2.5"/>
<circle cx="578.3" cy="483.3" r="2.5"/>
<circle cx="600.1" cy="483.3" r="2.5"/>
<circle cx="621.9" cy="483.3" r="2.5"/>
<circle cx="643.7" cy="483.3" r="2.5"/>
<circle cx="665.5" cy="483.3" r="2.5"/>
<circle cx="687.3" cy="483.3" r="2.5"/>
<circle cx="709.1" cy="483.3" r="2.5"/>
<circle cx="730.9" cy="483.3" r="2.5"/>
<circle cx="752.7" cy="483.3" r="2.5"/>
<circle cx="774.5" cy="483.3" r="2.5"/>
<circle cx="796.3" cy="479.4" r="2.5"/>
<circle cx="818.1" cy="475.5" r="2.5"/>
<circle cx="839.9" cy="472.8" r="2.5"/>
<circle cx="861.7" cy="469.8" r="2.5"/>
<circle cx="883.5" cy="466.3" r="2.5"/>
<circle cx="905.3" cy="462.2" r="2.5"/>
<circle cx="927.1" cy="458.7" r="2.5"/>
<circle cx="948.9" cy="455.9" r="2.5"/>
<circle cx="970.7" cy="452.4" r="2.5"/>
<circle cx="992.5" cy="451.7" r="2.5"/>
</g>
<path d="M992.3 420V632" stroke="#44cc44" stroke-width="2" fill="none"/>
<text x="605" y="505" font-size="11" fill="#2222ff" font-family="Noto Sans CJK JP, sans-serif">通攻境界</text>
<text x="877" y="492" font-size="11" fill="#ff4444" font-family="Noto Sans CJK JP, sans-serif">バースト境界</text>
</svg>
<table class="hp" style="left:558px;top:651px"><colgroup><col style="width:146px"><col style="width:145px"><col style="width:146px"></colgroup>
<tr><th><span>戦闘時HP</span><div class="btn" style="left:66px;top:3.5px;width:42.5px;height:20px;line-height:18px;font-size:12px;text-shadow:none;font-weight:normal;color:#000">100%</div></th><td>54,954</td><td><span class="jp">最大</span> 54,954</td></tr>
<tr><th><span>通常攻撃</span></th><td>1,047,013</td><td><span class="jp">境界</span> 791,875</td></tr>
<tr><th><span>バースト</span></th><td>3,914,280</td><td><span class="jp">境界</span> 3,250,000</td></tr>
</table>
<h2 class="hd" style="left:552px;top:764.5px">データ保存</h2>
<div class="btn jp" style="left:672px;top:772px;width:47px;height:21px;line-height:19px;font-size:12px">一覧</div>
<div class="btn jp" style="left:921px;top:772px;width:58px;height:21px;line-height:19px;font-size:12px">再計算</div>
<label class="rd" style="left:747px;top:775px"><i class="on"></i><span>1頁</span></label>
<label class="rd" style="left:788px;top:775px"><i></i><span>2頁</span></label>
<label class="rd" style="left:829px;top:775px"><i></i><span>3頁</span></label>
<div class="stabs" style="left:569.5px;top:803px;width:415.5px"><div class="tab">A</div><div class="tab on">B</div><div class="tab">C</div><div class="tab">D</div><div class="tab">E</div><div class="tab">F</div></div>
<table class="sv" style="left:569px;top:850px"><colgroup><col style="width:178px"><col style="width:238px"></colgroup><tr><th>名称</th><th>操作</th></tr><tr><td>&nbsp;</td><td>&nbsp;</td></tr></table>
</body></html>
